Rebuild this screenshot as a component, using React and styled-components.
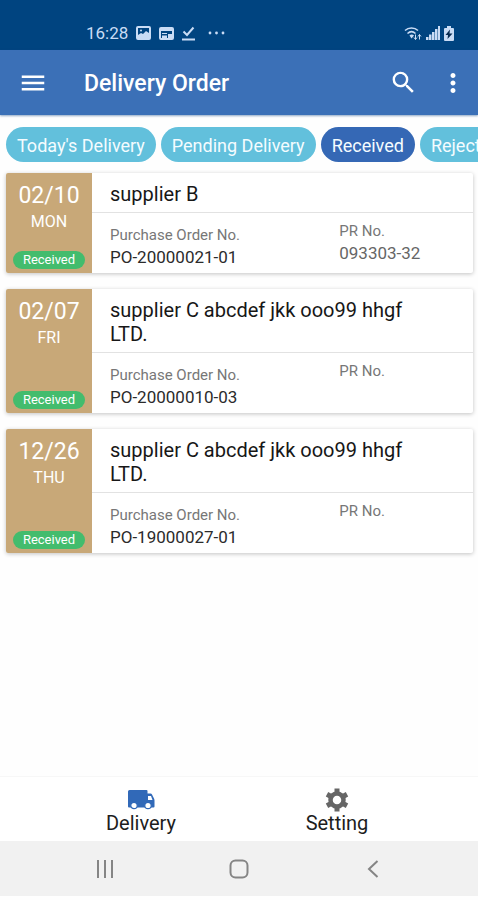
import React from "react";
import styled, { createGlobalStyle } from "styled-components";
import { MdMenu, MdSearch, MdMoreVert } from "react-icons/md";

const GlobalStyle = createGlobalStyle`
  *, *::before, *::after { box-sizing: border-box; }
  body { margin: 0; background: #fefefe; font-family: Roboto, "Liberation Sans", sans-serif; }
  button { font: inherit; border: 0; padding: 0; background: none; color: inherit; cursor: pointer; }
  h1, h2, p, dl, dt, dd, ul { margin: 0; padding: 0; font-weight: 400; }
  svg { display: block; }
`;

const Screen = styled.div`
  display: flex;
  flex-direction: column;
  min-height: 100vh;
  padding-bottom: 4px;
  overflow: hidden;
`;

const StatusBar = styled.div`
  display: flex;
  align-items: center;
  justify-content: space-between;
  height: 50px;
  padding: 16px 24px 0 86px;
  background: #004480;
  color: #c9dcf5;
`;

const StatusGroup = styled.div`
  display: flex;
  align-items: center;
  gap: ${(p) => p.$gap};
`;

const Time = styled.span`
  font-size: 17px;
  line-height: 20px;
`;

const AppBar = styled.header`
  display: flex;
  align-items: center;
  height: 65px;
  padding: 0 10px 0 18px;
  background: #3b70b7;
  color: #fff;
  box-shadow: 0 1px 2px rgba(30, 80, 140, 0.5);
`;

const Title = styled.h1`
  flex: 1;
  padding: 2px 0 0 36px;
  font-size: 23px;
  line-height: 28px;
  font-weight: 500;
`;

const Actions = styled.div`
  display: flex;
  align-items: center;
  gap: 20px;
`;

const Chips = styled.nav`
  display: flex;
  gap: 5px;
  padding: 12px 0 11px 6px;
  overflow: hidden;
`;

const Chip = styled.button`
  flex: none;
  height: 35px;
  padding: 2px 11px 0;
  border-radius: 18px;
  background: ${(p) => (p.$active ? "#3568b5" : "#62c0dc")};
  color: #f4fcff;
  font-size: 18px;
  line-height: 24px;
`;

const Orders = styled.main`
  display: flex;
  flex: 1;
  flex-direction: column;
  gap: 16px;
  padding: 0 5px 16px 6px;
`;

const Card = styled.article`
  display: flex;
  border-radius: 2px;
  background: #fff;
  box-shadow: 0 1px 4px rgba(0, 0, 0, 0.24);
`;

const DatePanel = styled.div`
  display: flex;
  flex: none;
  flex-direction: column;
  align-items: center;
  width: 86px;
  padding: 9px 7px 4px;
  border-radius: 2px 0 0 2px;
  background: #c8a878;
  color: #fff;
`;

const DateText = styled.time`
  font-size: 23px;
  line-height: 28px;
`;

const Weekday = styled.span`
  font-size: 16px;
  line-height: 24px;
`;

const Badge = styled.span`
  width: 100%;
  margin-top: auto;
  border-radius: 9px;
  background: #43bc6d;
  font-size: 13px;
  line-height: 18px;
  text-align: center;
`;

const Details = styled.div`
  flex: 1;
  min-width: 0;
`;

const Supplier = styled.h2`
  padding: 9px 60px 6px 18px;
  border-bottom: 1px solid #e2e2e2;
  color: #171717;
  font-size: 20px;
  line-height: 24px;
`;

const Fields = styled.dl`
  display: grid;
  grid-template-columns: 12fr 7fr;
  padding: 7px 0 4px 18px;
`;

const Field = styled.div`
  min-height: 49px;
  padding-top: ${(p) => (p.$primary ? "4px" : "0")};
  color: ${(p) => (p.$primary ? "#2b2b2b" : "#666")};
`;

const Label = styled.dt`
  color: #777;
  font-size: 15px;
  line-height: 22px;
`;

const Value = styled.dd`
  font-size: 17px;
  line-height: 23px;
`;

const TabBar = styled.nav`
  display: flex;
  justify-content: center;
  height: 65px;
  border-top: 1px solid #f7f7f7;
  background: #fff;
`;

const Tab = styled.button`
  display: flex;
  flex-direction: column;
  align-items: center;
  width: 41%;
  padding-top: 11px;
  color: #1d1d1d;
  font-size: 20px;
  line-height: 22px;

  svg { color: ${(p) => (p.$active ? "#3169b8" : "#666")}; }
`;

const SystemBar = styled.div`
  display: flex;
  align-items: center;
  justify-content: center;
  height: 55px;
  background: #f1f1f1;
  color: #858585;
`;

const SystemButton = styled.button`
  display: flex;
  align-items: center;
  justify-content: center;
  width: 28%;
  height: 100%;
`;

const PictureIcon = () => (
  <svg width="15" height="14" viewBox="0 0 15 14" aria-hidden="true">
    <rect x="1" y="1" width="13" height="12" rx="1" fill="none" stroke="currentColor" strokeWidth="2" />
    <path d="M2 12V9l3-2 2 1 3-3 3 2v5z" fill="currentColor" />
    <circle cx="5" cy="4.500" r="1" fill="currentColor" />
  </svg>
);

const NewsIcon = () => (
  <svg width="15" height="13" viewBox="0 0 15 13" aria-hidden="true">
    <rect x="1" y="1" width="13" height="11" rx="1" fill="none" stroke="currentColor" strokeWidth="2" />
    <path d="M1 1h13v3H1zM3 6h5v1H3zM9 7h4v4H9zM3 8.500h5V11H3z" fill="currentColor" />
  </svg>
);

const DoneIcon = () => (
  <svg width="13" height="15" viewBox="0 0 13 15" fill="none" stroke="currentColor" strokeWidth="2" aria-hidden="true">
    <path d="M1.500 5.500 5 9l6.500-7.500M0 13.500h13" />
  </svg>
);

const DotsIcon = () => (
  <svg width="29" height="4" viewBox="-5 0 29 4" fill="currentColor" aria-hidden="true">
    <circle cx="2" cy="2" r="1.400" /><circle cx="8.500" cy="2" r="1.400" /><circle cx="15" cy="2" r="1.400" />
  </svg>
);

const WifiIcon = () => (
  <svg width="18" height="15" viewBox="0 0 18 15" fill="none" stroke="currentColor" aria-hidden="true">
    <path d="M1 4.500C4.500 1 10.500 1 14 4.500M3.500 7.500c2.500-2.300 5.500-2.300 8 0" strokeWidth="1.500" />
    <path d="m5.500 9.500 2 3 2.500-3c-1.300-1.200-3.200-1.200-4.500 0z" fill="currentColor" stroke="none" />
    <path d="M11.500 8.500v5m-1.500-2 1.500 2 1.500-2M15.500 13.500v-5m-1.500 2 1.500-2 1.500 2" strokeWidth="1" />
  </svg>
);

const SignalIcon = () => (
  <svg width="14" height="14" viewBox="0 0 14 14" fill="currentColor" aria-hidden="true">
    <path d="M0 11h2.500v3H0zM3 8.500h2.500V14H3zM6 6h2.500v8H6zM9 3h2.500v11H9zM12 0h2v14h-2z" />
  </svg>
);

const BatteryIcon = () => (
  <svg width="10" height="15" viewBox="0 0 10 15" aria-hidden="true">
    <path d="M3 0h4v2h2q1 0 1 1v11q0 1-1 1H1q-1 0-1-1V3q0-1 1-1h2z" fill="currentColor" />
    <path d="M6 3.500 1.500 9H4l-.5 4L8.500 7.500H5.500z" fill="#092c51" />
  </svg>
);

const TruckIcon = () => (
  <svg width="27" height="24" viewBox="0 0 27 24" fill="currentColor" aria-hidden="true">
    <path d="M1.500 2h17q1 0 1 1v2.500h3q1 0 1.500 1l2 4q.5 1 .5 2v6q0 1-1 1H1q-1 0-1-1V3.500q0-1.500 1.500-1.500z" />
    <path d="M20 8v4h4.500l-1.500-4z" fill="#fff" />
    <circle cx="6" cy="17.500" r="3.200" stroke="currentColor" strokeWidth="1.200" fill="#fff" />
    <circle cx="20" cy="17.500" r="3.200" stroke="currentColor" strokeWidth="1.200" fill="#fff" />
  </svg>
);

const GearIcon = () => (
  <svg width="24" height="24" viewBox="0 0 24 24" fill="none" stroke="currentColor" aria-hidden="true">
    <circle cx="12" cy="12" r="6.500" strokeWidth="4.500" />
    <path
      d="M12 .5V5M12 19v4.500M2 6.300 6 8.500M18 15.500l4 2.200M2 17.700 6 15.500M18 8.500 22 6.300"
      strokeWidth="5"
    />
  </svg>
);

const RecentsIcon = () => (
  <svg width="18" height="18" viewBox="0 0 18 18" fill="none" stroke="currentColor" strokeWidth="2" aria-hidden="true">
    <path d="M2 0v18M9 0v18M16 0v18" />
  </svg>
);

const HomeIcon = () => (
  <svg width="20" height="20" viewBox="0 0 20 20" fill="none" stroke="currentColor" strokeWidth="2" aria-hidden="true">
    <rect x="1.500" y="1.500" width="17" height="17" rx="5" />
  </svg>
);

const BackIcon = () => (
  <svg width="12" height="18" viewBox="0 0 12 18" fill="none" stroke="currentColor" strokeWidth="2" aria-hidden="true">
    <path d="M10.500 1 2 9l8.500 8" />
  </svg>
);

const filters = ["Today's Delivery", "Pending Delivery", "Received", "Rejected"];

const orders = [
  { date: "02/10", day: "MON", supplier: "supplier B", po: "PO-20000021-01", pr: "093303-32" },
  { date: "02/07", day: "FRI", supplier: "supplier C abcdef jkk ooo99 hhgf LTD.", po: "PO-20000010-03", pr: "" },
  { date: "12/26", day: "THU", supplier: "supplier C abcdef jkk ooo99 hhgf LTD.", po: "PO-19000027-01", pr: "" },
];

function OrderCard({ order }) {
  return (
    <Card>
      <DatePanel>
        <DateText>{order.date}</DateText>
        <Weekday>{order.day}</Weekday>
        <Badge>Received</Badge>
      </DatePanel>
      <Details>
        <Supplier>{order.supplier}</Supplier>
        <Fields>
          <Field $primary>
            <Label>Purchase Order No.</Label>
            <Value>{order.po}</Value>
          </Field>
          <Field>
            <Label>PR No.</Label>
            <Value>{order.pr}</Value>
          </Field>
        </Fields>
      </Details>
    </Card>
  );
}

export default function App() {
  return (
    <>
      <GlobalStyle />
      <Screen>
        <StatusBar>
          <StatusGroup $gap="8px">
            <Time>16:28</Time>
            <PictureIcon />
            <NewsIcon />
            <DoneIcon />
            <DotsIcon />
          </StatusGroup>
          <StatusGroup $gap="4px">
            <WifiIcon />
            <SignalIcon />
            <BatteryIcon />
          </StatusGroup>
        </StatusBar>
        <AppBar>
          <button aria-label="Menu"><MdMenu size={30} /></button>
          <Title>Delivery Order</Title>
          <Actions>
            <button aria-label="Search"><MdSearch size={29} /></button>
            <button aria-label="More options"><MdMoreVert size={30} /></button>
          </Actions>
        </AppBar>
        <Chips aria-label="Order status">
          {filters.map((name) => (
            <Chip key={name} $active={name === "Received"} aria-pressed={name === "Received"}>{name}</Chip>
          ))}
        </Chips>
        <Orders>
          {orders.map((order) => <OrderCard key={order.po} order={order} />)}
        </Orders>
        <TabBar aria-label="Sections">
          <Tab $active><TruckIcon />Delivery</Tab>
          <Tab><GearIcon />Setting</Tab>
        </TabBar>
        <SystemBar>
          <SystemButton aria-label="Recent apps"><RecentsIcon /></SystemButton>
          <SystemButton aria-label="Home"><HomeIcon /></SystemButton>
          <SystemButton aria-label="Back"><BackIcon /></SystemButton>
        </SystemBar>
      </Screen>
    </>
  );
}
